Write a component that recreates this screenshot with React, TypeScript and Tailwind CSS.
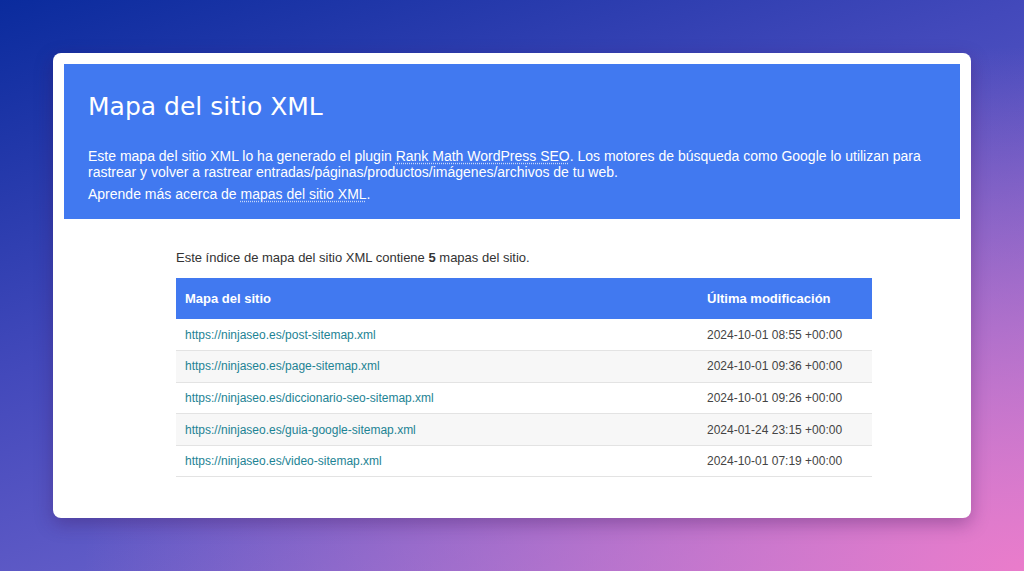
const rows = [
  { url: 'https://ninjaseo.es/post-sitemap.xml', date: '2024-10-01 08:55 +00:00' },
  { url: 'https://ninjaseo.es/page-sitemap.xml', date: '2024-10-01 09:36 +00:00' },
  { url: 'https://ninjaseo.es/diccionario-seo-sitemap.xml', date: '2024-10-01 09:26 +00:00' },
  { url: 'https://ninjaseo.es/guia-google-sitemap.xml', date: '2024-01-24 23:15 +00:00' },
  { url: 'https://ninjaseo.es/video-sitemap.xml', date: '2024-10-01 07:19 +00:00' },
]

export default function App() {
  return (
    <div
      className="w-[1024px] h-[571px] overflow-hidden bg-[radial-gradient(ellipse_at_100%_100%,#ea7ccb_0%,rgba(234,124,203,0)_65%),linear-gradient(160deg,#0a2b9d_0%,#4349bb_40%,#8c76d8_100%)] pt-[53px] pl-[53px]"
      style={{ fontFamily: '"Liberation Sans", Arial, sans-serif' }}
    >
      <div className="w-[918px] h-[465px] bg-white rounded-lg p-[11px] shadow-[0_6px_18px_rgba(60,20,90,0.35)]">
        {/* Header */}
        <div className="bg-[#4179f0] h-[155px] pl-6 pr-6 pt-[28px] text-white">
          <h1
            className="text-[25px] leading-[30px]"
            style={{ fontFamily: '"DejaVu Sans", Verdana, sans-serif' }}
          >
            Mapa del sitio XML
          </h1>
          <p className="mt-[26px] text-[14px] leading-[16px]">
            Este mapa del sitio XML lo ha generado el plugin{' '}
            <a className="underline decoration-dotted decoration-white/70 underline-offset-2">Rank Math WordPress SEO</a>. Los motores de búsqueda como Google lo utilizan para rastrear y volver a rastrear entradas/páginas/productos/imágenes/archivos de tu web.
          </p>
          <p className="mt-[6px] text-[14px] leading-[16px]">
            Aprende más acerca de{' '}
            <a className="underline decoration-dotted decoration-white/70 underline-offset-2">mapas del sitio XML</a>.
          </p>
        </div>

        {/* Content */}
        <div className="pl-[112px] pt-[31px] w-[808px]">
          <p className="text-[13px] text-[#333] leading-[16px]">
            Este índice de mapa del sitio XML contiene <b>5</b> mapas del sitio.
          </p>
          <table className="mt-[12px] w-[696px] border-collapse text-[12px]">
            <thead>
              <tr className="bg-[#4179f0] text-white h-[41px]">
                <th className="text-left font-bold text-[13px] pl-[9px] w-[522px]">Mapa del sitio</th>
                <th className="text-left font-bold text-[13px] pl-[9px]">Última modificación</th>
              </tr>
            </thead>
            <tbody>
              {rows.map((r, i) => (
                <tr
                  key={r.url}
                  className={`h-[31.6px] border-b border-[#e3e3e3] ${i % 2 === 1 ? 'bg-[#f7f7f7]' : 'bg-white'}`}
                >
                  <td className="pl-[9px] text-[#1d8394]">{r.url}</td>
                  <td className="pl-[9px] text-[#444]">{r.date}</td>
                </tr>
              ))}
            </tbody>
          </table>
        </div>
      </div>
    </div>
  )
}
